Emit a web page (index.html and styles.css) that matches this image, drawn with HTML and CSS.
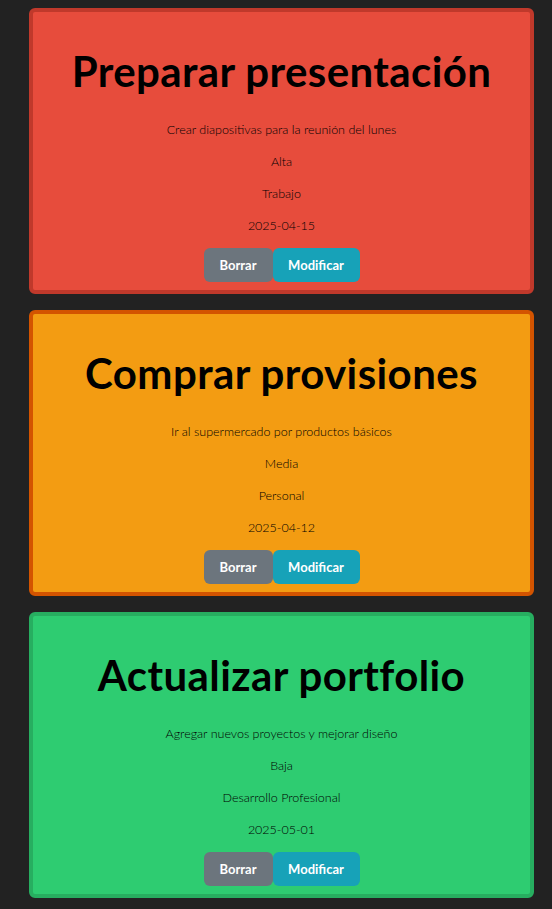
FILE: index.html
```html
<!DOCTYPE html>
<html lang="es">
<head>
<meta charset="utf-8">
<title>Tareas</title>
<link rel="stylesheet" href="styles.css">
</head>
<body>
<main class="list">
  <section class="card card-alta">
    <h1 class="title">Preparar presentación</h1>
    <div class="details">
      <p class="line">Crear diapositivas para la reunión del lunes</p>
      <p class="line">Alta</p>
      <p class="line">Trabajo</p>
      <p class="line">2025-04-15</p>
      <div class="actions">
        <button class="btn btn-gray">Borrar</button>
        <button class="btn btn-info">Modificar</button>
      </div>
    </div>
  </section>
  <section class="card card-media">
    <h1 class="title">Comprar provisiones</h1>
    <div class="details">
      <p class="line">Ir al supermercado por productos básicos</p>
      <p class="line">Media</p>
      <p class="line">Personal</p>
      <p class="line">2025-04-12</p>
      <div class="actions">
        <button class="btn btn-gray">Borrar</button>
        <button class="btn btn-info">Modificar</button>
      </div>
    </div>
  </section>
  <section class="card card-baja">
    <h1 class="title">Actualizar portfolio</h1>
    <div class="details">
      <p class="line">Agregar nuevos proyectos y mejorar diseño</p>
      <p class="line">Baja</p>
      <p class="line">Desarrollo Profesional</p>
      <p class="line">2025-05-01</p>
      <div class="actions">
        <button class="btn btn-gray">Borrar</button>
        <button class="btn btn-info">Modificar</button>
      </div>
    </div>
  </section>
</main>
</body>
</html>
```
FILE: styles.css
```css
html, body {
  margin: 0;
  padding: 0;
  background: #222222;
}
body {
  font-family: Lato, "Open Sans", sans-serif;
  color: #000;
}
.list {
  display: flex;
  flex-direction: column;
  gap: 16px;
  padding: 8px 18px 0 29px;
}
.card {
  height: 286px;
  box-sizing: border-box;
  border: 4px solid;
  border-radius: 6px;
  padding: 0 16px 8px;
  display: flex;
  flex-direction: column;
  align-items: center;
}
.card-alta { background: #e74c3c; border-color: #c0392b; }
.card-media { background: #f39c12; border-color: #d35400; }
.card-baja { background: #2ecc71; border-color: #27ae60; }
.title {
  margin: 35px 0 27px;
  font-size: 42px;
  line-height: 48px;
  letter-spacing: 0.4px;
  font-weight: 700;
  white-space: nowrap;
}
.details {
  align-self: stretch;
  display: flex;
  flex-direction: column;
  align-items: center;
  gap: 16px;
}
.line {
  margin: 0;
  font-size: 12.5px;
  line-height: 16px;
  font-weight: 300;
}
.actions {
  display: flex;
  margin-top: -2px;
}
.btn {
  height: 34px;
  border: none;
  border-radius: 6px;
  color: #fff;
  font-family: inherit;
  font-size: 13px;
  font-weight: 700;
  padding: 0;
  cursor: pointer;
}
.btn-gray { background: #6c757d; width: 69px; }
.btn-info { background: #17a2b8; width: 87px; }
```
